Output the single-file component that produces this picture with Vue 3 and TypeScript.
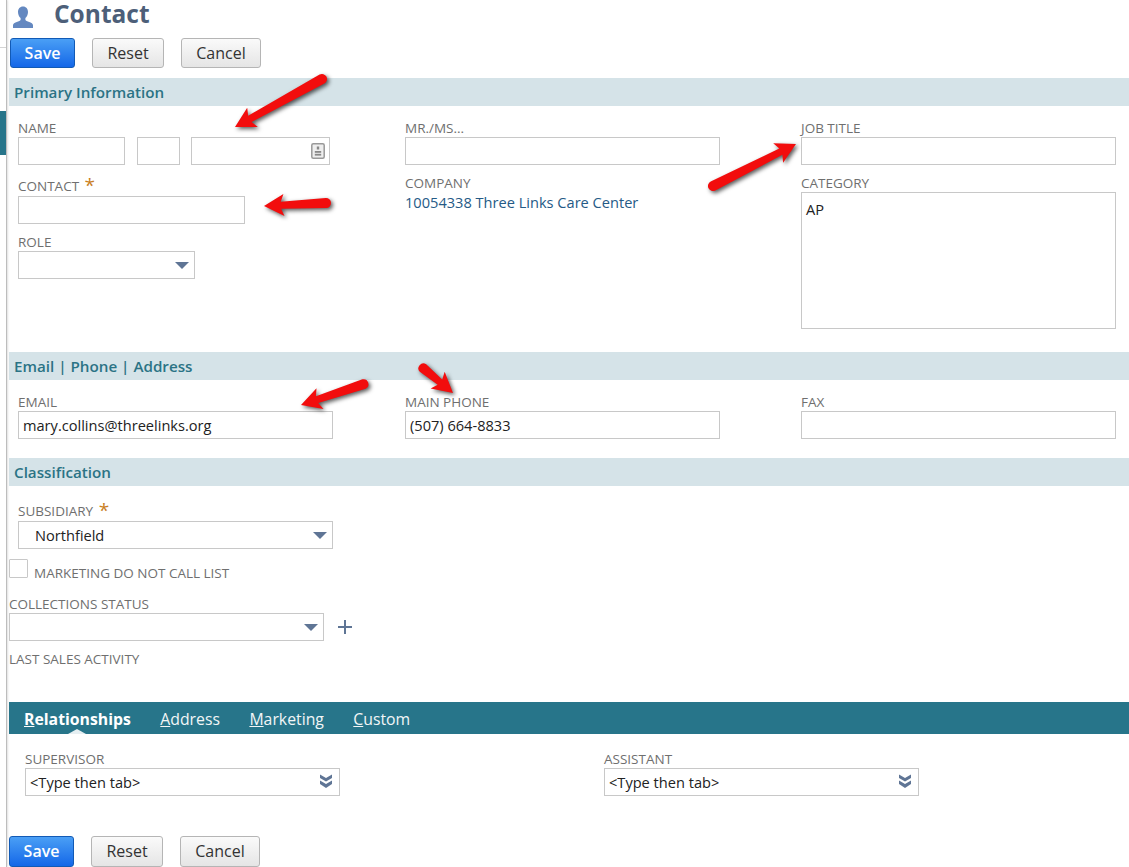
<script setup lang="ts">
interface Arrow { tail: [number, number]; tip: [number, number] }
const arrows: Arrow[] = [
  { tail: [322, 79], tip: [235, 127] },
  { tail: [326, 203], tip: [264, 206] },
  { tail: [713, 186], tip: [796, 144] },
  { tail: [364, 384], tip: [301, 405] },
  { tail: [423, 368], tip: [453, 393] },
]
function arrowPath(a: Arrow): string {
  const [x0, y0] = a.tail
  const [x1, y1] = a.tip
  const len = Math.hypot(x1 - x0, y1 - y0)
  const ux = (x1 - x0) / len
  const uy = (y1 - y0) / len
  const nx = -uy
  const ny = ux
  const head = 17
  const bx = x1 - ux * head
  const by = y1 - uy * head
  const p = (x: number, y: number, n: number) => `${(x + nx * n).toFixed(1)} ${(y + ny * n).toFixed(1)}`
  return `M${p(x0, y0, 5)} L${p(bx, by, 3.5)} L${p(bx - ux * 3, by - uy * 3, 11)} L${x1} ${y1} L${p(bx - ux * 3, by - uy * 3, -11)} L${p(bx, by, -3.5)} L${p(x0, y0, -5)} A5 5 0 0 0 ${p(x0, y0, 5)}Z`
}
const tabs = [
  { first: 'R', rest: 'elationships', active: true },
  { first: 'A', rest: 'ddress', active: false },
  { first: 'M', rest: 'arketing', active: false },
  { first: 'C', rest: 'ustom', active: false },
]
</script>

<template>
  <div class="page">
    <aside class="edge">
      <div class="edge-line"></div>
      <div class="edge-tab"></div>
    </aside>
    <main class="main">
      <header class="title">
        <svg class="person" viewBox="0 0 24 24" width="24" height="24" aria-hidden="true">
          <path d="M12 1.500c3.200 0 5 2.400 5 5.600 0 2.600-1.100 4.800-2.600 6v1.600c0 .9 1.100 1.400 3.200 2 2.900 .9 4.400 1.800 4.400 3.600V23H2v-2.700c0-1.800 1.500-2.700 4.400-3.600 2.100-.6 3.200-1.100 3.200-2v-1.600C8.100 11.900 7 9.700 7 7.100c0-3.200 1.800-5.600 5-5.600z" fill="#6488c0"/>
        </svg>
        <h1>Contact</h1>
      </header>
      <div class="buttons top">
        <button class="btn primary">Save</button>
        <button class="btn reset">Reset</button>
        <button class="btn cancel">Cancel</button>
      </div>

      <h2 class="bar first">Primary Information</h2>
      <section class="grid primary-grid">
        <div class="col">
          <label class="lab">NAME</label>
          <div class="name-row">
            <div class="inp n1"></div>
            <div class="inp n2"></div>
            <div class="inp n3">
              <svg class="card" viewBox="0 0 14 16" width="14" height="16" aria-hidden="true">
                <rect x="0.8" y="0.8" width="12.400" height="14.400" rx="1.500" fill="#eee" stroke="#999" stroke-width="1.500"/>
                <rect x="5.800" y="3.500" width="2.400" height="3" fill="#888"/>
                <rect x="3.800" y="8" width="6.400" height="1.800" fill="#888"/>
                <rect x="3.800" y="10.800" width="6.400" height="1.800" fill="#888"/>
              </svg>
            </div>
          </div>
          <label class="lab contact-lab">CONTACT <span class="req">*</span></label>
          <div class="inp w227"></div>
          <label class="lab role-lab">ROLE</label>
          <div class="inp sel w177"><i class="caret"></i></div>
        </div>
        <div class="col">
          <label class="lab">MR./MS...</label>
          <div class="inp w315"></div>
          <label class="lab next">COMPANY</label>
          <a class="link">10054338 Three Links Care Center</a>
        </div>
        <div class="col">
          <label class="lab">JOB TITLE</label>
          <div class="inp w315"></div>
          <label class="lab next">CATEGORY</label>
          <div class="inp w315 listbox">AP</div>
        </div>
      </section>

      <h2 class="bar">Email | Phone | Address</h2>
      <section class="grid contact-grid">
        <div class="col">
          <label class="lab">EMAIL</label>
          <div class="inp w315 val">mary.collins@threelinks.org</div>
        </div>
        <div class="col">
          <label class="lab">MAIN PHONE</label>
          <div class="inp w315 val">(507) 664-8833</div>
        </div>
        <div class="col">
          <label class="lab">FAX</label>
          <div class="inp w315"></div>
        </div>
      </section>

      <h2 class="bar">Classification</h2>
      <section class="classification">
        <label class="lab sub-lab">SUBSIDIARY <span class="req">*</span></label>
        <div class="inp sel w315 sub-val">Northfield<i class="caret"></i></div>
        <div class="check-row">
          <span class="check"></span>
          <label class="lab check-lab">MARKETING DO NOT CALL LIST</label>
        </div>
        <label class="lab flush coll-lab">COLLECTIONS STATUS</label>
        <div class="coll-row">
          <div class="inp sel w315"><i class="caret"></i></div>
          <svg class="plus" viewBox="0 0 14 14" width="14" height="14" aria-hidden="true">
            <path d="M7 0v14M0 7h14" stroke="#5f7595" stroke-width="2"/>
          </svg>
        </div>
        <label class="lab flush last-lab">LAST SALES ACTIVITY</label>
      </section>

      <nav class="tabs">
        <a v-for="t in tabs" :key="t.first" class="tab" :class="{ active: t.active }"><u>{{ t.first }}</u>{{ t.rest }}</a>
      </nav>
      <section class="rel">
        <div class="rel-col">
          <label class="lab">SUPERVISOR</label>
          <div class="inp sel w315 val type">&lt;Type then tab&gt;
            <svg class="dbl" viewBox="0 0 14 14" width="14" height="14" aria-hidden="true">
              <path d="M1 0.500l6 3.500 6-3.500v3.500l-6 3.500-6-3.500zM1 6.500l6 3.500 6-3.500v3.500l-6 4-6-4z" fill="#5f7595"/>
            </svg>
          </div>
        </div>
        <div class="rel-col">
          <label class="lab">ASSISTANT</label>
          <div class="inp sel w315 val type">&lt;Type then tab&gt;
            <svg class="dbl" viewBox="0 0 14 14" width="14" height="14" aria-hidden="true">
              <path d="M1 0.500l6 3.500 6-3.500v3.500l-6 3.500-6-3.500zM1 6.500l6 3.500 6-3.500v3.500l-6 4-6-4z" fill="#5f7595"/>
            </svg>
          </div>
        </div>
      </section>
      <div class="buttons bottom">
        <button class="btn primary">Save</button>
        <button class="btn reset">Reset</button>
        <button class="btn cancel">Cancel</button>
      </div>
    </main>

    <svg class="arrows" width="1129" height="867" aria-hidden="true">
      <path v-for="(a, i) in arrows" :key="i" :d="arrowPath(a)" fill="#f20d0d"/>
    </svg>
  </div>
</template>

<style scoped>
.page {
  position: relative;
  display: flex;
  width: 1129px;
  height: 867px;
  overflow: hidden;
  background: #fff;
  font-family: "Open Sans", "Liberation Sans", sans-serif;
  color: #222;
}
.edge {
  width: 7px;
  flex: none;
  border-right: 1px solid #bdbdbd;
  box-sizing: border-box;
  padding-top: 47px;
  box-shadow: 1px 0 2px rgba(0, 0, 0, 0.12);
}
.edge-line { height: 1px; background: #d4d4d4; }
.edge-tab { height: 44px; margin-top: 63px; background: #27758a; }
.main { flex: 1; min-width: 0; padding-left: 2px; }
.title { display: flex; align-items: flex-start; height: 30px; padding-left: 2px; }
.person { margin-top: 5px; }
.title h1 {
  margin: 0 0 0 19px;
  font-size: 24.500px;
  line-height: 28px;
  font-weight: 700;
  color: #4d5f79;
}
.buttons { display: flex; }
.top { margin-top: 8px; padding-left: 1px; }
.bottom { margin-top: 40px; }
.btn {
  box-sizing: border-box;
  height: 30px;
  padding: 0;
  border: 1px solid #b5b5b5;
  border-radius: 3px;
  background: linear-gradient(#fafafa, #e5e5e5);
  font: 400 16px/1 "Open Sans", "Liberation Sans", sans-serif;
  color: #333;
}
.bottom .btn { height: 31px; padding-bottom: 1px; }
.primary {
  width: 65px;
  border-color: #125ab5;
  background: linear-gradient(#4a9ff5, #1467e8);
  color: #fff;
  font-weight: 600;
}
.reset { width: 72px; margin-left: 17px; }
.cancel { width: 80px; margin-left: 17px; }
.bar {
  height: 28px;
  margin: 0;
  padding-left: 5px;
  background: #d5e3e8;
  font-size: 15.200px;
  line-height: 28px;
  font-weight: 600;
  color: #2b7385;
}
.first { margin-top: 10px; }
.grid {
  display: grid;
  grid-template-columns: 387px 396px 1fr;
  padding-left: 9px;
}
.primary-grid { height: 246px; }
.contact-grid { height: 78px; }
.lab {
  display: block;
  height: 18px;
  font-size: 13.500px;
  line-height: 18px;
  color: #6f6f6f;
}
.col > .lab:first-child { margin-top: 13px; }
.inp {
  position: relative;
  box-sizing: border-box;
  height: 28px;
  border: 1px solid #c8c8c8;
  background: #fff;
}
.w315 { width: 315px; }
.w227 { width: 227px; }
.w177 { width: 177px; }
.name-row { display: flex; }
.n1 { width: 107px; }
.n2 { width: 43px; margin-left: 12px; }
.n3 { width: 139px; margin-left: 11px; }
.card { position: absolute; right: 4px; top: 5px; }
.contact-lab { margin-top: 11px; height: 20px; }
.req { color: #c9801f; font-size: 19px; line-height: 18px; margin-left: 2px; vertical-align: -1px; }
.role-lab { margin-top: 9px; }
.next { margin-top: 9px; }
.link { display: block; height: 20px; font-size: 14.600px; line-height: 20px; color: #255a86; }
.listbox {
  height: 137px;
  padding: 5px 4px;
  font-size: 14.600px;
  line-height: 22px;
}
.val { padding-left: 4px; font-size: 14.600px; line-height: 26px; color: #222; }
.caret {
  position: absolute;
  right: 5px;
  top: 10px;
  width: 0;
  height: 0;
  border-left: 7px solid transparent;
  border-right: 7px solid transparent;
  border-top: 7px solid #5f7595;
}
.classification { box-sizing: border-box; height: 216px; padding-top: 15px; }
.classification > .lab:not(.flush) { margin-left: 9px; }
.sub-lab { height: 20px; }
.sub-val { margin: 0 0 0 9px; padding-left: 16px; font-size: 14.600px; line-height: 26px; }
.check-row { display: flex; height: 31px; margin-top: 10px; }
.check {
  box-sizing: border-box;
  width: 19px;
  height: 19px;
  border: 1px solid #c8c8c8;
  border-radius: 1px;
}
.check-row .check-lab { margin: 5px 0 0 6px; }
.coll-lab { margin-top: 5px; }
.coll-row { display: flex; align-items: center; }
.plus { margin-left: 14px; }
.last-lab { margin-top: 9px; }
.tabs {
  display: flex;
  gap: 29.400px;
  height: 32px;
  padding-left: 15px;
  background: #27758a;
}
.tab {
  position: relative;
  font-size: 15.800px;
  line-height: 34px;
  color: #f2f6f7;
}
.tab.active { font-weight: 700; color: #fff; }
.tab.active::after {
  content: "";
  position: absolute;
  left: 44px;
  bottom: 0;
  border-left: 9px solid transparent;
  border-right: 9px solid transparent;
  border-bottom: 5px solid #e6eff2;
}
.rel { display: flex; height: 62px; padding-left: 16px; }
.rel-col { flex: none; width: 579px; padding-top: 16px; }
.dbl { position: absolute; right: 6px; top: 5px; }
.arrows {
  position: absolute;
  left: 0;
  top: 0;
  pointer-events: none;
  filter: drop-shadow(2px 2px 2px rgba(0, 0, 0, 0.65));
}
</style>
